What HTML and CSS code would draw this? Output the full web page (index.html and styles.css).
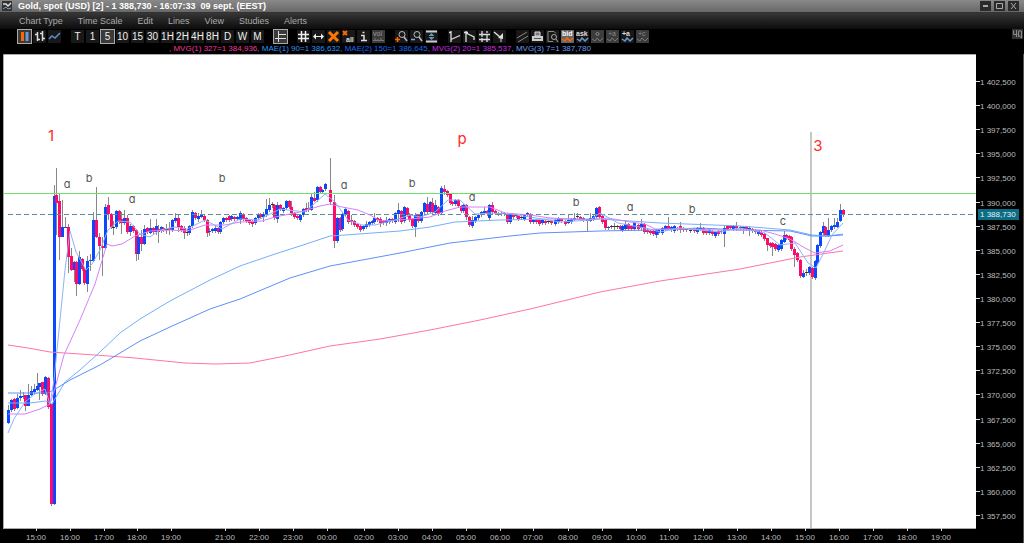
FILE: index.html
```
<!DOCTYPE html>
<html lang="en">
<head>
  <meta charset="UTF-8" />
  <meta name="viewport" content="width=device-width, initial-scale=1.0"/>
  <title>Gold, spot (USD)</title>
  <link rel="stylesheet" href="styles.css">
</head>
<body>
  <header class="titlebar">
    <svg class="logo" viewBox="0 0 10 10"><rect width="10" height="10" fill="#333"/><path d="M1 3h3l2 2 3-3" stroke="#ddd" stroke-width="1.5" fill="none"/><path d="M1 8l3-2 2 2 3-1" stroke="#7a9cc0" fill="none"/></svg>
    <h1>Gold, spot (USD) [2] - 1 388,730 - 16:07:33 &nbsp;09 sept. (EEST)</h1>
    <div class="win-buttons">
      <button aria-label="Minimize"><svg viewBox="0 0 11 10"><path d="M3 5h5" stroke-width="2"/></svg></button>
      <button aria-label="Maximize"><svg viewBox="0 0 11 10"><path d="M2.5 2.5h6v5h-6z"/></svg></button>
      <button aria-label="Close"><svg viewBox="0 0 11 10"><path d="M3 2l5 6M8 2l-5 6"/></svg></button>
    </div>
  </header>

  <nav class="menu">
    <button>Chart Type</button>
    <button>Time Scale</button>
    <button>Edit</button>
    <button>Lines</button>
    <button>View</button>
    <button>Studies</button>
    <button>Alerts</button>
  </nav>

  <div class="toolbar">
    <div class="group">
      <button class="active" aria-label="Candles"><svg viewBox="0 0 13 13"><path d="M4.5 2v9" stroke="#f60" stroke-width="3"/><path d="M9 2v9" stroke="#6a9ad8" stroke-width="3"/></svg></button>
      <button aria-label="Bars"><svg viewBox="0 0 13 13"><path d="M4.5 2v9M2 4.5h2M5 9.5h2M9.5 1v10M7 3.5h2M10 8.5h2" stroke="#ddd" stroke-width="1.5"/></svg></button>
      <button aria-label="Line"><svg viewBox="0 0 13 13"><path d="M1 9l3-3 3 2 5-5" stroke="#5a8fd0" stroke-width="1.5"/></svg></button>
    </div>
    <div class="group">
      <button>T</button>
      <button>1</button>
      <button class="active">5</button>
      <button>10</button>
      <button>15</button>
      <button>30</button>
      <button>1H</button>
      <button>2H</button>
      <button>4H</button>
      <button>8H</button>
      <button>D</button>
      <button>W</button>
      <button>M</button>
    </div>
    <div class="group">
      <button class="active" aria-label="Layout"><svg viewBox="0 0 13 13"><path d="M4.5 1v11M1 8.5h11M4 4.5h8" stroke="#ddd"/></svg></button>
    </div>
    <div class="group">
      <button aria-label="Grid"><svg viewBox="0 0 13 13"><path d="M4.5 1v11M8.5 1v11M1 4.5h11M1 8.5h11" stroke="#eee" stroke-width="1.5"/></svg></button>
      <button aria-label="Fit width"><svg viewBox="0 0 13 13"><path d="M2 6.5h9" stroke="#eee"/><path d="M1 6.5l3-3v6zM12 6.5l-3-3v6z" fill="#eee"/></svg></button>
      <button aria-label="Delete"><svg viewBox="0 0 13 13"><path d="M2 2l9 9M11 2l-9 9" stroke="#f70" stroke-width="3"/></svg></button>
      <button aria-label="Delete all"><svg viewBox="0 0 13 13"><path d="M1 1l4 4M5 1l-4 4" stroke="#f60" stroke-width="2"/><text x="4" y="12" font-size="7" font-weight="bold" fill="#ddd">all</text></svg></button>
      <button aria-label="Info"><svg viewBox="0 0 13 13"><path d="M4 5.5h3v5M4 10.500h6M5.5 2.5h2" stroke="#ddd" stroke-width="1.5"/></svg></button>
      <button class="off" aria-label="Volume"><svg viewBox="0 0 13 13"><text x="1" y="6" font-size="7" fill="#999">vol</text><path d="M1 10.5h11M3 8v3M6 9v2M9 8v3" stroke="#777"/></svg></button>
    </div>
    <div class="group">
      <button aria-label="Zoom in"><svg viewBox="0 0 13 13"><circle cx="7" cy="4.5" r="3" stroke="#bbb"/><path d="M9 7l3 4" stroke="#bbb" stroke-width="1.5"/><path d="M0 9.5h5M2.5 7v5" stroke="#f60" stroke-width="1.5"/></svg></button>
      <button aria-label="Zoom out"><svg viewBox="0 0 13 13"><circle cx="7" cy="4.5" r="3" stroke="#bbb"/><path d="M9 7l3 4" stroke="#bbb" stroke-width="1.5"/><path d="M1 9.5h4" stroke="#7ad" stroke-width="1.5"/></svg></button>
      <button aria-label="Fit height"><svg viewBox="0 0 13 13"><path d="M1 1.5h11M1 11.5h11" stroke="#ccc" stroke-width="2"/><path d="M6.5 3l3 3h-6zM6.5 10l3-3h-6z" fill="#69b"/></svg></button>
    </div>
    <div class="group">
      <button aria-label="Trend line"><svg viewBox="0 0 13 13"><path d="M3 1v11M1 2.5h2M3 9.5l9-4" stroke="#ddd" stroke-width="1.3"/></svg></button>
      <button aria-label="Ray"><svg viewBox="0 0 13 13"><path d="M3 1v11M1 2.5h4M3 3l8 4v3" stroke="#ddd" stroke-width="1.3"/></svg></button>
      <button aria-label="Levels"><svg viewBox="0 0 13 13"><path d="M1 4.5h11M1 9.5h11M4 1v6M9 5v7M9 1v2M4 8v4" stroke="#ddd" stroke-width="1.3"/></svg></button>
      <button aria-label="Fan"><svg viewBox="0 0 13 13"><path d="M1 2l6 5" stroke="#ddd" stroke-width="1.5"/><path d="M10 3v6l-5-1z" fill="#ddd"/><path d="M8 8v4" stroke="#ddd"/></svg></button>
    </div>
    <div class="group">
      <button aria-label="Channel"><svg viewBox="0 0 13 13"><path d="M1 8l10-6M2 12l10-6" stroke="#888"/></svg></button>
      <button aria-label="Print"><svg viewBox="0 0 13 13"><path d="M4 2h5v4h-5z" fill="#777" stroke="#ddd"/><path d="M1 6h11v5h-11z" fill="#ccc"/><path d="M3 8.5h7" stroke="#555"/></svg></button>
      <button aria-label="Preview"><svg viewBox="0 0 13 13"><path d="M7 11.5h-5v-10h6l2 2" stroke="#888"/><circle cx="8" cy="7" r="2.5" stroke="#aaa"/><path d="M10 9l2 3" stroke="#aaa"/></svg></button>
      <button class="lit" aria-label="Bid"><svg viewBox="0 0 13 13"><text x="1" y="6" font-size="7" font-weight="bold" fill="#fff">bid</text><path d="M1 9l3 2 2-3 3 3 3-3" stroke="#f60" stroke-width="1.5"/></svg></button>
      <button aria-label="Ask"><svg viewBox="0 0 13 13"><text x="0" y="6" font-size="7" font-weight="bold" fill="#ddd">ask</text><path d="M1 9l3 2 2-3 3 3 3-3" stroke="#69c" stroke-width="1.5"/></svg></button>
      <button class="off" aria-label="Overlay"><svg viewBox="0 0 13 13"><circle cx="6.5" cy="4" r="1.5" stroke="#888"/><path d="M1 9l3 2 2-3 3 3 3-3" stroke="#777"/></svg></button>
      <button class="off" aria-label="Add A"><svg viewBox="0 0 13 13"><text x="2" y="6" font-size="7" fill="#888">+a</text><path d="M1 9l3 2 2-3 3 3 3-3" stroke="#777"/></svg></button>
      <button aria-label="Add B"><svg viewBox="0 0 13 13"><text x="1" y="6" font-size="7" font-weight="bold" fill="#ddd">+a</text><path d="M1 9l3 2 2-3 3 3 3-3" stroke="#69c" stroke-width="1.5"/></svg></button>
      <button class="off" aria-label="Add C"><svg viewBox="0 0 13 13"><text x="2" y="6" font-size="7" fill="#888">+c</text><path d="M1 9l3 2 2-3 3 3 3-3" stroke="#777"/></svg></button>
    </div>
    <button class="dock" aria-label="Dock"><svg viewBox="0 0 11 10"><path d="M1.5 1.5v4h4M4.5 1v7M6.5 8v-6h3v7M6 6l4 3" stroke="#888"/></svg></button>
  </div>

  <p class="readout">
    <span class="mvg1">, MVG(1) 327=1 384,936</span><span class="mae1">, MAE(1) 90=1 386,632</span><span class="mae2">, MAE(2) 150=1 386,645</span><span class="mvg2">, MVG(2) 20=1 385,537</span><span class="mvg3">, MVG(3) 7=1 387,780</span>
  </p>

  <main>
    <svg id="chart" class="chart" viewBox="0 54 1024 489" role="img" aria-label="Gold spot, 5 minute candles">
      <rect class="plot" x="4" y="55" width="972" height="473"/>
      <path class="frame" d="M3.5 528.5V54.5H976M3 528.5H976"/>
      <path class="cursor" d="M811 132V528"/>
      <g id="candles"></g>
      <path class="level" d="M4 193.5H976"/>
      <path class="last" d="M8 214.5H976"/>
      <polyline class="ma pink" points="8,345 28,348 50,352 95,355 135,358 185,363 215,364 250,363 285,356 330,346 380,339 430,330 480,320 530,309 600,292 660,281 740,269 800,257 843,251"/>
      <polyline class="ma sky" points="8,403 30,403 46,401 52,404 65,382 80,370 100,352 120,333 140,319 170,301 210,280 240,266 275,254 300,246 330,236 345,235 400,231 430,227 455,222 500,220 550,219 600,219 660,223 740,226 790,230 812,235 828,236 843,234"/>
      <polyline class="ma blue" points="8,393 48,393 57,388 70,380 100,365 140,341 170,327 210,309 240,299 290,278 330,266 400,253 450,243 510,236 540,233 600,231 650,230 700,228 740,230 790,231 812,236 828,236 843,235"/>
      <polyline class="ma violet" points="8,414 25,414 40,409 50,404 55,388 64,355 80,320 95,284 107,244 112,246 122,244 135,236 150,231 170,230 187,231 205,225 225,225 240,222 262,221 275,217 300,212 320,206 330,204 342,207 358,210 370,215 380,221 400,220 430,217 445,211 460,207 490,207 505,213 530,215 550,218 590,220 608,218 630,222 645,224 655,229 680,229 720,230 760,230 775,234 790,239 805,248 815,253 830,251 843,245"/>
      <polyline class="ma pale" points="8,433 14,419 25,402 35,394 45,389 50,404 54,380 60,320 65,270 70,231 76,252 86,270 92,264 100,250 108,230 118,221 130,222 140,234 150,237 160,230 175,227 187,229 205,220 222,229 240,219 258,220 280,209 305,212 325,194 335,202 348,220 362,225 375,225 395,220 410,215 420,217 435,212 448,200 460,200 475,214 490,213 510,214 530,217 560,222 590,220 600,213 618,223 650,229 660,232 680,228 720,232 740,228 765,233 780,245 795,243 808,263 816,268 825,250 832,235 843,223"/>
      <g class="waves">
        <text x="67" y="188">a</text>
        <text x="89" y="182">b</text>
        <text x="132" y="203">a</text>
        <text x="222" y="182">b</text>
        <text x="344" y="189">a</text>
        <text x="412" y="187">b</text>
        <text x="472" y="201">a</text>
        <text x="576" y="206">b</text>
        <text x="630" y="211">a</text>
        <text x="692" y="213">b</text>
        <text x="783" y="225">c</text>
      </g>
      <g class="majors">
        <text x="51" y="141">1</text>
        <text x="462" y="144">p</text>
        <text x="818" y="151">3</text>
      </g>
      <g id="prices" class="axis"></g>
      <g id="hours" class="axis hours"></g>
      <rect class="tag" x="978" y="209" width="41" height="11"/>
      <text class="tag-text" x="980" y="217">1 388,730</text>
      <path class="edge" d="M1023.5 54V543"/>
    </svg>
  </main>
  <script src="chart.js"></script>
</body>
</html>
```
FILE: styles.css
```
* {
  box-sizing: border-box;
}

body {
  margin: 0;
  background: #000;
  font-family: "Liberation Sans", Arial, sans-serif;
  color: #aaa;
}

button {
  border: none;
  padding: 0;
  background: none;
  color: inherit;
  font: inherit;
  cursor: pointer;
}

svg {
  display: block;
}

.titlebar {
  display: flex;
  align-items: center;
  height: 13px;
  padding: 0 5px 0 2px;
  background: linear-gradient(#898989, #686868);
  border-bottom: 1px solid #333;
}

.titlebar h1 {
  flex: 1;
  margin: 0 0 0 6px;
  font-size: 9px;
  line-height: 12px;
  color: #fff;
}

.logo {
  width: 10px;
  height: 10px;
}

.win-buttons {
  display: flex;
  gap: 3px;
}

.win-buttons button {
  width: 11px;
  height: 10px;
  background: #2b2b2b;
}

.win-buttons path {
  fill: none;
  stroke: #aaa;
}

.menu {
  display: flex;
  gap: 15px;
  height: 16px;
  padding: 0 19px;
  background: linear-gradient(#363636, #0c0c0c);
  font-size: 9px;
  line-height: 16px;
}

.toolbar {
  display: flex;
  gap: 8px;
  height: 15px;
  padding-left: 17px;
}

.group {
  display: flex;
}

.group button {
  width: 13px;
  height: 13px;
  margin: 1px;
  background: #181818;
  color: #eee;
  font-size: 10px;
  line-height: 13px;
  white-space: nowrap;
}

.group svg {
  width: 13px;
  height: 13px;
  fill: none;
}

.group .active {
  background: #3a3a3a;
  outline: 1px solid #aaa;
}

.group .off {
  background: #3c3c3c;
}

.group .lit {
  background: #666;
}

.dock {
  width: 11px;
  height: 10px;
  margin-left: auto;
  margin-right: 1px;
  background: #333;
}

.dock svg {
  fill: none;
}

.readout {
  height: 10px;
  margin: 0;
  padding-left: 169px;
  font-size: 8px;
  line-height: 10px;
  white-space: nowrap;
}

.mvg1 {
  color: #f0389a;
}

.mae1 {
  color: #2e94f4;
}

.mae2 {
  color: #1868f0;
}

.mvg2 {
  color: #cc2ce4;
}

.mvg3 {
  color: #6c9cf4;
}

/* Chart */
.chart {
  width: 100%;
  height: auto;
}

.plot {
  fill: #fff;
}

.frame {
  fill: none;
  stroke: #aaa;
}

.edge {
  stroke: #555;
}

.wick {
  stroke: #888;
}

.up {
  fill: #0a48ff;
}

.down {
  fill: #ff0a6c;
}

.flat {
  fill: #333;
}

.level {
  stroke: #6be36b;
}

.last {
  stroke: #5c8e9c;
  stroke-dasharray: 5 3;
}

.cursor {
  stroke: #c6c6c6;
  stroke-width: 2;
}

.ma {
  fill: none;
}

.pink {
  stroke: #ff74a8;
}

.sky {
  stroke: #74b0fa;
}

.blue {
  stroke: #5c90fa;
}

.violet {
  stroke: #d880fa;
}

.pale {
  stroke: #8cb4fa;
}

.waves,
.majors {
  font-family: Inter, sans-serif;
  font-feature-settings: "cv11";
  text-anchor: middle;
}

.waves {
  font-size: 11px;
  fill: #555;
}

.majors {
  font-size: 15px;
  fill: #ff2a2a;
}

.axis,
.tag-text {
  font-size: 8px;
  fill: #bbb;
}

.axis path {
  stroke: #ddd;
}

.hours {
  text-anchor: middle;
}

.tag {
  fill: #0c6c84;
}

.tag-text {
  fill: #e4f0f4;
}
```
FILE: chart.js
```
const NS = "http://www.w3.org/2000/svg";

function add(parent, name, attrs, text) {
  const el = document.createElementNS(NS, name);
  for (const key in attrs) el.setAttribute(key, attrs[key]);
  if (text) el.textContent = text;
  parent.appendChild(el);
}

// x, direction (u/d/f), body top, body bottom, optional wick top and bottom
const candles = `
8 u 410 423 405 424|11 u 400 410|14 d 399 409|17 u 398 408 394 409|20 u 396 398 390 401|23 u 396 397 392 399
25 d 395 406 395 411|28 u 395 406 384 406|31 u 391 395 386 396|34 u 389 392 384 395|37 u 386 390 373 391|39 u 383 387 383 400
42 d 382 394 382 396|45 u 377 394 376 395|48 d 378 407|51 d 404 504 404 506|54 u 196 504 185 505|56 d 195 203 168 235
59 d 201 237 193 260|62 u 227 237 200 237|65 u 227 228 217 228|68 d 227 257 224 273|71 d 256 270 248 271|74 u 262 270 261 282
76 d 262 284 261 296|79 u 257 284 251 285|82 d 259 269|84 d 269 283 268 285|87 u 261 284 256 292|90 u 260 261 254 271
93 u 220 261 212 262|96 d 220 237 187 238|99 d 237 246 233 260|102 d 246 248 237 276|105 u 207 248 204 249|108 d 205 214 197 220
111 d 214 227|113 f 227 228 221 235|116 u 211 227 210 229|119 d 211 222|121 d 219 223 212 234|124 u 218 223 210 225|127 d 218 232 215 234
130 u 226 232 224 236|133 d 226 231|136 d 230 254 229 261|138 u 237 254 235 260|141 d 237 244 230 251|144 u 229 244 225 245|147 d 228 232
150 u 228 233 219 234|153 d 228 232|156 u 226 232 219 235|158 d 229 232 225 243|161 u 227 231|163 d 228 230|166 f 229 230 224 234|169 d 228 230 222 235
172 u 220 230|175 u 218 221 213 223|178 d 218 227 214 232|181 d 226 230|184 d 228 233 226 239|187 f 232 233 229 236|189 u 226 233|192 u 212 226 210 228
195 d 213 218|198 u 216 219 213 222|201 u 215 217 210 218|204 d 216 220|207 d 220 233 219 237|209 u 231 232 228 236|212 u 229 231|215 u 228 231 225 233|218 d 228 232
220 u 222 232|223 u 218 222|226 d 218 220|229 d 216 220|231 u 216 219|234 d 217 219|237 u 217 219|240 u 213 220 211 224|243 d 214 219
246 d 218 221|249 d 220 223|252 d 222 224 220 227|255 u 218 223|258 u 214 218|260 d 214 217|263 u 214 217 212 222|266 u 209 215 199 217|269 u 205 210 198 212
272 f 204 205 202 208|274 d 205 218|277 u 205 219 202 223|280 d 205 209|283 u 208 211|286 u 201 208|289 d 201 207|291 d 207 213 201 216
294 d 213 217|297 d 216 218|300 u 215 220|303 u 209 215|306 d 208 210 203 212|308 d 208 210 202 212|311 u 197 210 193 211|314 d 198 201 192 202
317 u 187 200|320 d 187 192|322 u 190 192|325 u 184 189|330 d 190 202 158 205|334 d 202 241 195 248|337 u 218 241|340 d 218 230|342 u 214 229
345 u 209 215 207 217|348 d 211 222|351 d 220 222 215 225|354 d 221 225|357 d 224 227|360 d 226 230|363 u 226 229|366 u 224 227 221 229|369 u 222 225
372 u 221 223|374 u 218 222 213 224|377 d 218 220|380 d 219 223 217 227|383 d 221 223|386 u 220 223 217 226|389 u 219 222|392 d 219 221
395 u 213 222|398 u 210 214 203 222|401 d 211 222|404 u 207 221|407 d 208 215|409 d 214 220|412 d 219 226|415 u 215 227 213 237|418 d 215 221
421 u 212 221|424 u 203 212|427 d 204 212 197 214|430 u 202 212|432 d 203 212 198 214|435 u 205 213 200 215|438 d 207 214|441 u 188 213 186 215|444 d 189 192 185 195
447 d 191 195|450 d 194 203|452 d 202 204|455 u 200 204|458 d 200 206|461 d 206 211|463 u 205 211|466 d 205 217 204 220|469 d 217 225|472 u 220 226 216 228
475 u 217 221|478 u 215 218|481 u 212 215|484 u 211 213 207 215|487 d 211 214|489 u 205 218|492 d 205 212 202 214|495 d 211 213|498 f 213 214|501 f 213 214|504 f 213 214
507 d 214 222|510 u 214 222 213 224|513 d 214 217|516 f 215 216|518 d 216 219|521 f 217 218|524 u 215 219|527 u 213 215|530 d 214 222|533 u 220 222|536 d 220 222|539 d 220 224 219 226
542 u 220 223|545 d 221 223|548 f 221 222|551 d 221 223|555 u 220 224|558 u 218 222|561 d 219 221|565 d 221 224|568 u 220 223 214 224|571 u 219 222|574 u 218 220 213 221|577 f 216 217 213 220
580 d 217 219|583 d 218 220|587 u 219 221 219 231|590 u 218 221 213 222|593 u 216 219|596 u 208 217 207 219|599 d 207 217|602 d 216 222|605 d 220 228 219 230|608 u 227 228|611 f 226 227|614 f 226 227 223 230
617 f 226 227|620 d 226 229|622 u 226 230|625 u 224 229 220 230|628 d 224 229|631 d 226 229|634 u 223 229|638 d 225 229|641 u 224 228 219 231|644 d 224 232|647 d 230 232|650 d 231 233|653 d 231 234
656 u 230 235 229 238|658 u 230 233|662 u 228 233|665 u 226 229|668 d 226 229 217 230|671 u 227 230|674 u 226 231|677 f 228 229|680 d 226 230 222 233|683 d 228 230|686 f 229 230|690 f 230 231|694 d 229 231
697 u 228 232|700 u 228 230 223 231|703 d 228 233|706 d 231 233|709 u 230 233|712 d 231 234|715 u 232 236|718 d 231 234|721 f 231 232|724 u 228 234 225 247|727 d 226 229|730 d 226 228|733 u 226 229|736 d 226 228 222 231
740 f 227 228|743 u 227 229 226 234|746 d 227 229|749 u 228 230 226 236|752 d 229 231|755 d 230 232|758 u 231 234|761 d 232 235|764 d 234 239|767 d 238 245 238 251|770 d 243 246|772 d 243 247 242 256|775 d 244 249
778 u 245 250|781 u 240 249|784 u 235 242 231 243|786 d 235 238|789 d 236 240|791 d 237 249|794 d 249 255 247 267|797 d 253 260|800 d 260 276|803 u 273 277 270 278|806 f 272 273 269 276|809 u 267 273
812 d 268 277|815 u 261 278|817 u 245 263|820 u 232 246|823 u 226 233 222 236|825 d 227 235|828 u 230 236 218 237|831 u 226 230|834 u 225 227 218 229|837 u 222 227 218 228|840 u 210 221 204 222|843 d 210 214 209 217
`.trim().split(/[|\n]/).map(row => row.split(" "));

const kinds = { u: "up", d: "down", f: "flat" };
const candleLayer = document.getElementById("candles");

candles.forEach(([x, dir, top, bottom, high, low]) => {
  const mid = Number(x) + 0.5;
  const y1 = high ? Number(high) : Number(top) - 1;
  const y2 = low ? Number(low) : Number(bottom) + 2;
  add(candleLayer, "path", { class: "wick", d: `M${mid} ${y1}V${y2}` });
  add(candleLayer, "rect", { class: kinds[dir], x: x - 1, y: top, width: 3, height: bottom - top });
});

// Price scale, one label every 2.5 dollars
const prices = document.getElementById("prices");
for (let i = 0; i < 19; i++) {
  const y = Math.round(81 + i * 24.11);
  const value = 1402.5 - i * 2.5;
  const label = "1 " + (value - 1000).toFixed(1).replace(".", ",") + "00";
  add(prices, "path", { d: `M976 ${y + 0.5}H980` });
  add(prices, "text", { x: 980, y: y + 4 }, label);
}

const hours = {
  "15:00": [36, 805], "16:00": [70, 839], "17:00": [104, 873], "18:00": [137, 907], "19:00": [171, 941],
  "21:00": [225], "22:00": [259], "23:00": [293], "00:00": [327], "02:00": [364], "03:00": [398],
  "04:00": [432], "05:00": [466], "06:00": [500], "07:00": [533], "08:00": [568], "09:00": [602],
  "10:00": [636], "11:00": [669], "12:00": [703], "13:00": [737], "14:00": [771]
};
const hourLayer = document.getElementById("hours");
for (const label in hours) {
  hours[label].forEach(x => {
    add(hourLayer, "path", { d: `M${x + 0.5} 528V531` });
    add(hourLayer, "text", { x: x, y: 540 }, label);
  });
}
```
